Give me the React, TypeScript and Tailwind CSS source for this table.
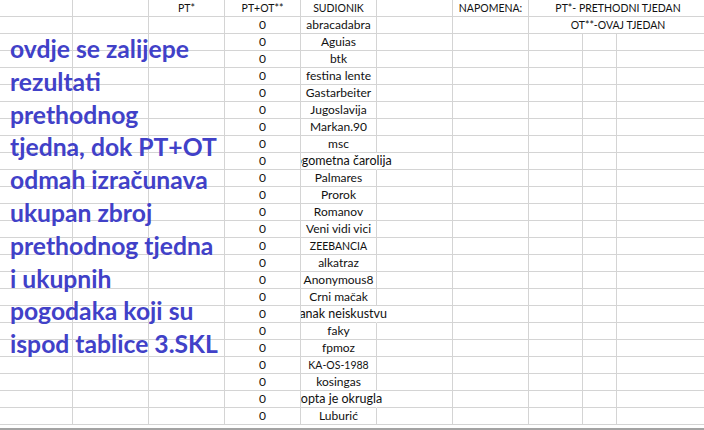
import { Fragment } from 'react'

type Row = { pt?: string; total?: string; name?: string; overflow?: boolean; note?: string; legend?: string }

const names = [
  'abracadabra',
  'Aguias',
  'btk',
  'festina lente',
  'Gastarbeiter',
  'Jugoslavija',
  'Markan.90',
  'msc',
  'Nogometna čarolija',
  'Palmares',
  'Prorok',
  'Romanov',
  'Veni vidi vici',
  'ZEEBANCIA',
  'alkatraz',
  'Anonymous8',
  'Crni mačak',
  'Danak neiskustvu',
  'faky',
  'fpmoz',
  'KA-OS-1988',
  'kosingas',
  'Lopta je okrugla',
  'Luburić',
]

// imena koja ne stanu u ćeliju i prelaze u susjednu
const wide = new Set(['Nogometna čarolija', 'Danak neiskustvu', 'Lopta je okrugla'])

const rows: Row[] = [
  { pt: 'PT*', total: 'PT+OT**', name: 'SUDIONIK', note: 'NAPOMENA:', legend: 'PT*- PRETHODNI TJEDAN' },
  ...names.map((n, i) => ({
    total: '0',
    name: n,
    overflow: wide.has(n),
    legend: i === 0 ? 'OT**-OVAJ TJEDAN' : undefined,
  })),
]

const note = [
  'ovdje se zalijepe',
  'rezultati',
  'prethodnog',
  'tjedna, dok PT+OT',
  'odmah izračunava',
  'ukupan zbroj',
  'prethodnog tjedna',
  'i ukupnih',
  'pogodaka koji su',
  'ispod tablice 3.SKL',
]

// Calibri ima uža velika slova od Lata, pa tekst samo s velikim slovima ide manje
function Txt({ value, big }: { value?: string; big?: boolean }) {
  if (!value) return null
  const caps = /[A-Z]/.test(value) && value === value.toUpperCase()
  return <span className={caps ? 'text-[10.5px]' : big ? 'text-[12.5px]' : ''}>{value}</span>
}

const cell = 'h-[17px] border-b border-r border-[#d4d4d4] flex justify-center items-end whitespace-nowrap leading-[16px]'

function SheetRow({ row, index }: { row: Row; index: number }) {
  const merged = index < 2
  return (
    <div className="flex">
      <div className="h-[17px] w-[73px] shrink-0 border-b border-r border-[#d4d4d4]" />
      <div className={`${cell} w-[76px] shrink-0`} />
      <div className={`${cell} w-[76px] shrink-0`}>
        <Txt value={row.pt} />
      </div>
      <div className={`${cell} w-[76px] shrink-0`}>
        <Txt value={row.total} />
      </div>
      <div
        className={`${cell} w-[76px] shrink-0 [clip-path:inset(0_-200px_0_0)] ${row.overflow ? 'border-r-transparent' : ''}`}
      >
        <Txt value={row.name} big={row.overflow} />
      </div>
      <div className={`${cell} w-[76px] shrink-0`} />
      <div className={`${cell} w-[76px] shrink-0`}>
        <Txt value={row.note} />
      </div>
      {merged ? (
        <div className="h-[17px] w-[178px] shrink-0 border-b border-[#d4d4d4] flex justify-center items-end whitespace-nowrap leading-[16px]">
          <Txt value={row.legend} />
        </div>
      ) : (
        <Fragment>
          <div className={`${cell} w-[54px] shrink-0`} />
          <div className={`${cell} w-[34px] shrink-0`} />
          <div className="h-[17px] w-[90px] shrink-0 border-b border-[#d4d4d4]" />
        </Fragment>
      )}
    </div>
  )
}

export default function App() {
  return (
    <div className="relative w-[704px] h-[430px] overflow-hidden bg-white text-[12px] text-[#111] font-['Lato',sans-serif]">
      <div className="flex flex-col">
        {rows.map((r, i) => (
          <SheetRow key={i} row={r} index={i} />
        ))}
      </div>
      <div className="mt-[3px] h-[2px] bg-[#a3a3a3]" />

      {/* tekstni okvir preko tablice */}
      <div className="absolute left-[10px] top-[33px] text-[24.7px] leading-[32.8px] font-bold text-[#4141c8]">
        {note.map((l) => (
          <div key={l}>{l}</div>
        ))}
      </div>
    </div>
  )
}
